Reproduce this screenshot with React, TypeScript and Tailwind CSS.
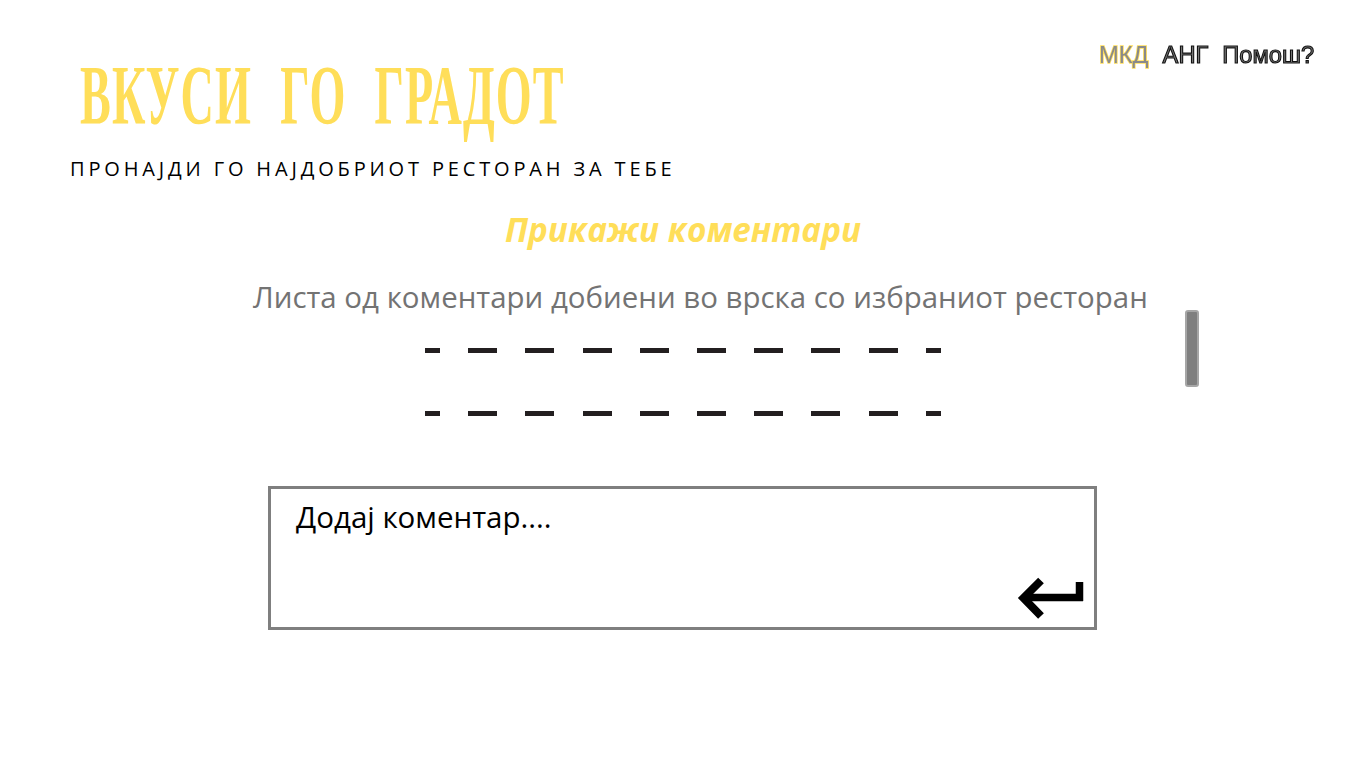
import React from "react";

const sans = "font-['Open_Sans',sans-serif]";

function DashRow() {
  return (
    <div className="flex items-center h-[5px] gap-[28.2px] ml-[425px]">
      <div className="w-[15px] h-[5px] bg-[#231f20]" />
      {[0, 1, 2, 3, 4, 5, 6, 7].map((i) => (
        <div key={i} className="w-[29px] h-[5px] bg-[#231f20]" />
      ))}
      <div className="w-[15px] h-[5px] bg-[#231f20]" />
    </div>
  );
}

export default function App() {
  return (
    <div className="relative w-[1366px] h-[768px] overflow-hidden bg-white">
      <nav className="absolute top-[41px] right-[52px] flex gap-[14px] font-['Liberation_Sans',sans-serif] text-[23.7px] leading-[28px] [will-change:transform] [-webkit-text-stroke:1.1px_#111] text-[#777]">
        <span className="[-webkit-text-stroke:1.6px_#ffde59] [paint-order:stroke_fill] text-[#8a8a8a]">МКД</span>
        <span>АНГ</span>
        <span>Помош?</span>
      </nav>

      <header className="pt-[52px] pl-[70px]">
        <h1 className="h-[88px] w-max origin-left scale-x-[0.55] ml-[10px] font-['Liberation_Serif',serif] font-bold text-[84px] leading-[88px] tracking-[2px] [word-spacing:28px] text-[#ffde59] whitespace-nowrap">
          ВКУСИ ГО ГРАДОТ
        </h1>
        <p className={`${sans} mt-[15px] text-[20px] leading-[27px] tracking-[3.85px] text-black`}>
          ПРОНАЈДИ ГО НАЈДОБРИОТ РЕСТОРАН ЗА ТЕБЕ
        </p>
      </header>

      <h2 className={`${sans} mt-[26px] text-center font-bold italic text-[33.3px] leading-[42px] text-[#ffde59]`}>
        Прикажи коментари
      </h2>

      <p className={`${sans} mt-[28px] ml-[253px] text-[29.44px] leading-[38px] text-[#737373] whitespace-nowrap`}>
        Листа од коментари добиени во врска со избраниот ресторан
      </p>

      <div className="mt-[32px] flex flex-col gap-[58px]">
        <DashRow />
        <DashRow />
      </div>

      <div className="absolute left-[1185px] top-[310px] w-[14px] h-[77px] rounded-[3px] bg-[#7f7f7f] border-2 border-[#a6a6a6]" />

      <div className="relative mt-[70px] ml-[268px] w-[829px] h-[144px] border-[3px] border-[#7f7f7f] pl-[25px] pt-[9px]">
        <span className={`${sans} text-[29.5px] leading-[38px] text-black`}>Додај коментар....</span>
        <svg className="absolute left-[745px] top-[87px]" width="68" height="44" viewBox="0 0 68 44" fill="none" stroke="#000" strokeWidth="8">
          <path d="M25 4.5 L7.5 22 L25 40" />
          <path d="M7 21.5 H67 M63.5 25 V6" strokeWidth="7.5" />
        </svg>
      </div>
    </div>
  );
}
